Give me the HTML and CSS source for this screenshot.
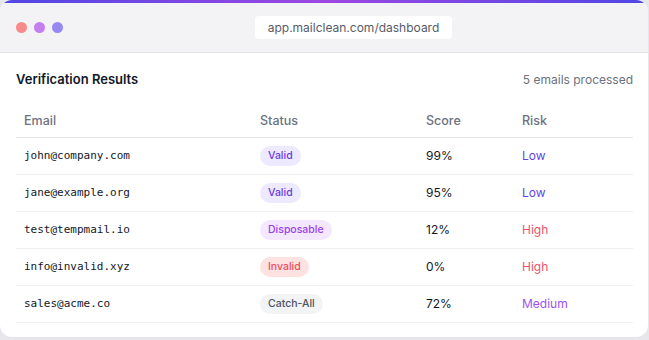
FILE: index.html
```html
<html>
<head>
    <title>MailClean Dashboard</title>
    <link rel="stylesheet" href="styles.css">
</head>
<body>
    <div class="window">
        <div class="accent"></div>
        <div class="titlebar">
            <div class="dots">
                <span class="dot red"></span>
                <span class="dot purple"></span>
                <span class="dot indigo"></span>
            </div>
            <div class="address">
                <div class="url">app.mailclean.com/dashboard</div>
            </div>
        </div>
        <div class="content">
            <div class="heading">
                <h2>Verification Results</h2>
                <span class="count">5 emails processed</span>
            </div>
            <table class="results">
                <tr>
                    <th class="col-email">Email</th>
                    <th class="col-status">Status</th>
                    <th class="col-score">Score</th>
                    <th>Risk</th>
                </tr>
                <tr>
                    <td class="email">john@company.com</td>
                    <td><span class="badge valid">Valid</span></td>
                    <td>99%</td>
                    <td class="risk low">Low</td>
                </tr>
                <tr>
                    <td class="email">jane@example.org</td>
                    <td><span class="badge valid">Valid</span></td>
                    <td>95%</td>
                    <td class="risk low">Low</td>
                </tr>
                <tr>
                    <td class="email">test@tempmail.io</td>
                    <td><span class="badge disposable">Disposable</span></td>
                    <td>12%</td>
                    <td class="risk high">High</td>
                </tr>
                <tr>
                    <td class="email">info@invalid.xyz</td>
                    <td><span class="badge invalid">Invalid</span></td>
                    <td>0%</td>
                    <td class="risk high">High</td>
                </tr>
                <tr>
                    <td class="email">sales@acme.co</td>
                    <td><span class="badge catchall">Catch-All</span></td>
                    <td>72%</td>
                    <td class="risk medium">Medium</td>
                </tr>
            </table>
        </div>
    </div>
</body>
</html>
```

FILE: styles.css
```css
body {
    margin: 0;
    background: #e7e7eb;
    font-family: Inter, "Noto Sans", sans-serif;
}
.window {
    width: 648px;
    height: 337px;
    background: #fff;
    border-radius: 12px;
    overflow: hidden;
}
.accent {
    height: 3px;
    background: linear-gradient(90deg, #4f46e5, #9d47e2, #4f46e5);
}
.titlebar {
    display: flex;
    align-items: center;
    height: 49px;
    padding: 0 16px;
    background: #f3f3f6;
    border-bottom: 1px solid #e3e3e6;
}
.dots {
    display: flex;
    gap: 7px;
}
.dot {
    width: 11px;
    height: 11px;
    border-radius: 50%;
}
.dot.red { background: #f98a8a; }
.dot.purple { background: #c47ef0; }
.dot.indigo { background: #968af2; }
.address {
    flex: 1;
    display: flex;
    justify-content: center;
    padding-left: 12px;
}
.url {
    background: #fff;
    border-radius: 4px;
    padding: 4px 13px;
    font-size: 12px;
    line-height: 15px;
    color: #555c68;
}
.content {
    padding: 16px 15px 0 16px;
}
.heading {
    display: flex;
    justify-content: space-between;
    align-items: center;
    height: 20px;
    margin-bottom: 15px;
}
.heading h2 {
    margin: 0;
    font-size: 13px;
    font-weight: 600;
    color: #111827;
}
.count {
    font-size: 12px;
    color: #6b7280;
}
.results {
    width: 100%;
    border-collapse: collapse;
}
.results th {
    text-align: left;
    font-size: 12.5px;
    font-weight: 500;
    color: #6b7280;
    height: 33px;
    padding: 0 8px;
    border-bottom: 1px solid #e5e7eb;
}
.results td {
    font-size: 12px;
    color: #111827;
    height: 37px;
    padding: 0 8px;
    border-bottom: 1px solid #eeeff1;
}
.col-email { width: 220px; }
.col-status { width: 150px; }
.col-score { width: 80px; }
.results td.email {
    font-family: "DejaVu Sans Mono", monospace;
    font-size: 11px;
}
.badge {
    display: inline-block;
    font-size: 10.5px;
    font-weight: 500;
    line-height: 20px;
    padding: 0 8px;
    border-radius: 10px;
}
.badge.valid { background: #ede9fe; color: #6d3ae0; }
.badge.disposable { background: #f3e8ff; color: #9b40ea; }
.badge.invalid { background: #fee2e2; color: #ef4e5a; }
.badge.catchall { background: #f2f3f5; color: #4b5563; }
.risk.low { color: #6145e6; }
.risk.high { color: #f0506a; }
.risk.medium { color: #a150f0; }
```
